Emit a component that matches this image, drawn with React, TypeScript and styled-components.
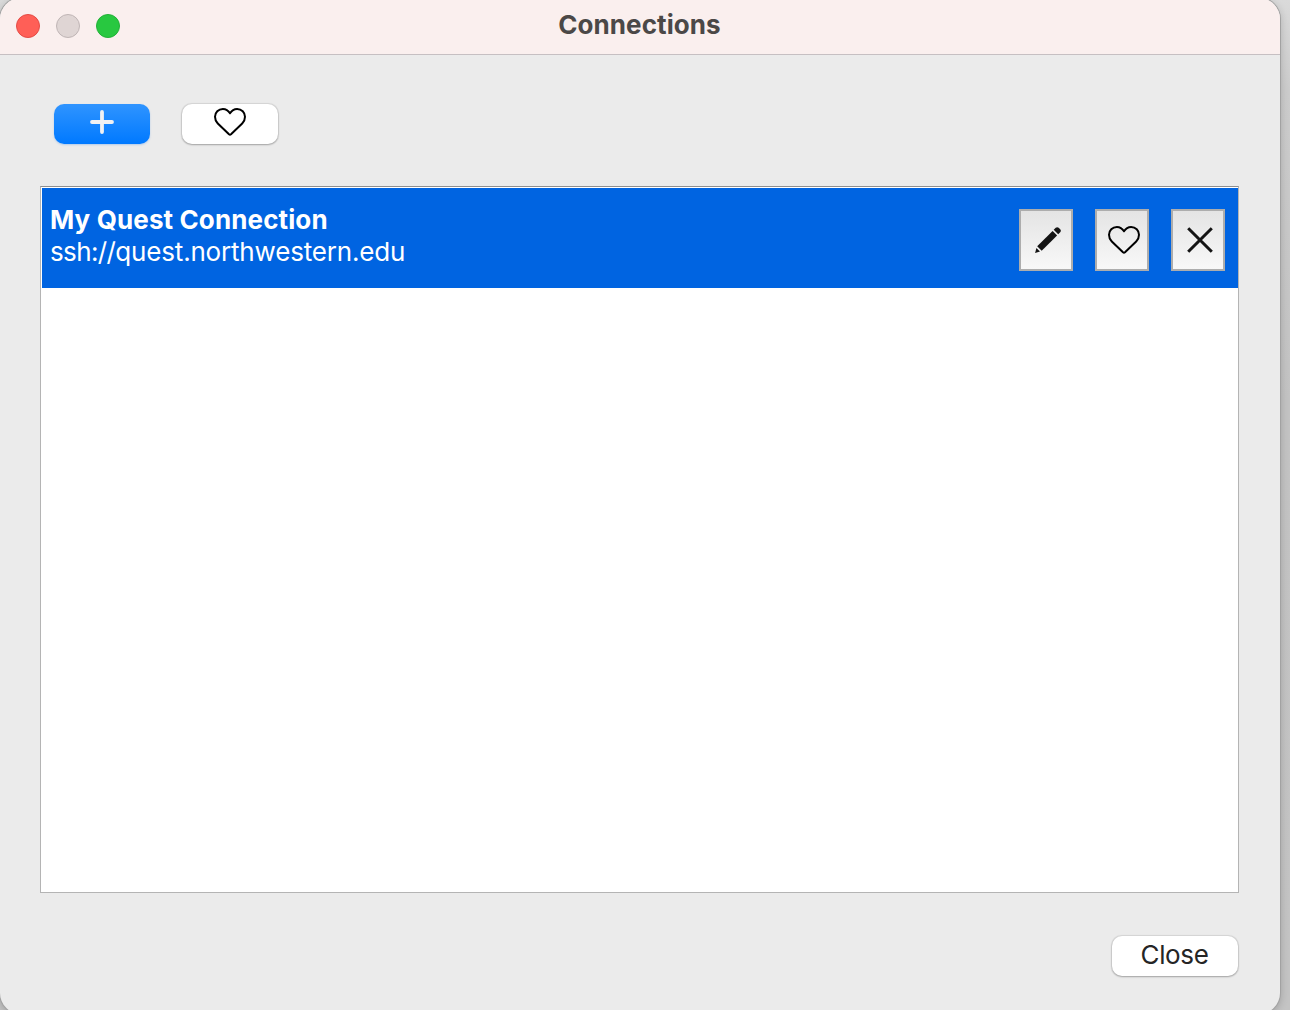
import React from "react";
import styled, { createGlobalStyle } from "styled-components";

const GlobalStyle = createGlobalStyle`
  *, *::before, *::after { box-sizing: border-box; }
  html, body { margin: 0; height: 100%; overflow: hidden; }
  body {
    background: #c4c4c4;
    font-family: Inter, "Liberation Sans", sans-serif;
  }
`;

const Desktop = styled.div`
  width: 1290px;
  height: 1010px;
  overflow: hidden;
  background: linear-gradient(180deg, #dadada 0, #cccccc 90px, #c3c3c3 400px, #c4c4c4 100%);
`;

const Window = styled.main`
  display: flex;
  flex-direction: column;
  width: 1280px;
  height: 1016px;
  margin-top: -2px;
  border-radius: 21px;
  overflow: hidden;
  background: #ebebeb;
  box-shadow: 0 0 0 1px #a2a2a2, 0 2px 9px rgba(0, 0, 0, 0.22);
`;

const TitleBar = styled.header`
  display: grid;
  grid-template-columns: 1fr auto 1fr;
  align-items: center;
  flex: none;
  height: 57px;
  padding: 2px 16px 2px;
  background: #faefee;
  border-bottom: 1px solid #c6bfc2;
`;

const Lights = styled.div`
  display: flex;
  gap: 16px;
`;

const Light = styled.span<{ $fill: string; $edge: string }>`
  width: 24px;
  height: 24px;
  border-radius: 50%;
  background: ${(p) => p.$fill};
  border: 1px solid ${(p) => p.$edge};
`;

const Title = styled.h1`
  margin: 0;
  padding: 0 1px 3px 0;
  color: #4b4847;
  font-size: 26px;
  line-height: 32px;
  font-weight: 700;
  letter-spacing: 0.08px;
`;

const Content = styled.div`
  display: flex;
  flex-direction: column;
  flex: 1;
  padding: 49px 41px 0 40px;
`;

const Toolbar = styled.div`
  display: flex;
  gap: 32px;
  padding-left: 14px;
`;

const PushButton = styled.button<{ $width: number; $primary?: boolean }>`
  display: flex;
  align-items: center;
  justify-content: center;
  width: ${(p) => p.$width}px;
  height: 40px;
  padding: 0 0 4px;
  border: 0;
  border-radius: 10px;
  color: ${(p) => (p.$primary ? "#f0f1f3" : "#252525")};
  background: ${(p) => (p.$primary ? "linear-gradient(#2f94ff, #0079ff)" : "#ffffff")};
  box-shadow: ${(p) =>
    p.$primary
      ? "0 1px 2px rgba(0, 110, 240, 0.25)"
      : "0 0 1px 0.5px rgba(0, 0, 0, 0.09), 0 1px 2px rgba(0, 0, 0, 0.24)"};
`;

const TextButton = styled(PushButton)`
  padding: 0 1px 2px 0;
  font: 400 26px/32px Inter, "Liberation Sans", sans-serif;
  letter-spacing: -0.35px;
`;

const List = styled.section`
  flex: none;
  height: 707px;
  margin-top: 42px;
  padding: 1px 0 0 1px;
  border: 1px solid #b4b4b4;
  border-top-color: #8e8e8e;
  background: #ffffff;
`;

const Row = styled.article`
  display: flex;
  align-items: center;
  justify-content: space-between;
  height: 100px;
  padding: 4px 13px 0 8px;
  background: #0064e1;
  color: #ffffff;
`;

const Details = styled.div`
  padding-bottom: 8px;
  font-size: 26px;
  line-height: 32px;
`;

const Name = styled.div`
  font-weight: 700;
  letter-spacing: 0.12px;
`;

const Address = styled.div`
  letter-spacing: -0.18px;
  font-feature-settings: "calt" 0;
`;

const Scheme = styled.span`
  letter-spacing: -0.62px;
`;

const Actions = styled.div`
  display: flex;
  gap: 22px;
`;

const ActionButton = styled.button`
  display: flex;
  align-items: center;
  justify-content: center;
  width: 54px;
  height: 62px;
  padding: 0 0 0 4px;
  border: 2px solid #adadad;
  background: linear-gradient(#e4e4e4, #f8f8f8);
`;

const Footer = styled.footer`
  display: flex;
  justify-content: flex-end;
  padding: 43px 1px 0 0;
`;

const Glyph = styled.svg`
  display: block;
  flex: none;
`;

const Heart = () => (
  <Glyph width="34" height="30" viewBox="0 0 34 30" fill="none" stroke="#000" strokeWidth="2" strokeLinejoin="round">
    <path d="M17 6.3C15.2 3.4 12.6 2 9.9 2C5.4 2 2 5.4 2 9.8C2 12.6 2.9 14.6 4.8 16.5L16 27.3Q17 28.2 18 27.3L29.2 16.5C31.1 14.6 32 12.6 32 9.8C32 5.4 28.6 2 24.1 2C21.4 2 18.8 3.4 17 6.3Z" />
  </Glyph>
);

const Plus = () => (
  <Glyph width="24" height="24" viewBox="0 0 24 24" fill="none" stroke="currentColor" strokeWidth="3.8" strokeLinecap="round">
    <path d="M12 2V22M2 12H22" />
  </Glyph>
);

const Pencil = () => (
  <Glyph width="28" height="28" viewBox="0 0 28 28" fill="#141414">
    <path d="M18.6 4.9L23.1 9.4L7.7 24.7L3.2 20.2Z" />
    <path d="M19.7 3.8L21.7 1.8C22.6 .9 23.8 .9 24.7 1.8L26.2 3.3C27.1 4.2 27.1 5.4 26.2 6.3L24.2 8.3Z" />
    <path d="M2.4 21.9L6 25.5L1.1 26.9Z" />
  </Glyph>
);

const Cross = () => (
  <Glyph width="28" height="28" viewBox="0 0 28 28" fill="none" stroke="#141414" strokeWidth="3">
    <path d="M2.2 2.2L25.8 25.8M25.8 2.2L2.2 25.8" />
  </Glyph>
);

export default function App() {
  return (
    <>
      <GlobalStyle />
      <Desktop>
        <Window>
          <TitleBar>
            <Lights>
              <Light $fill="#ff5f57" $edge="#e34c46" />
              <Light $fill="#dfd5d4" $edge="#bfb5b5" />
              <Light $fill="#28c840" $edge="#23b038" />
            </Lights>
            <Title>Connections</Title>
          </TitleBar>
          <Content>
            <Toolbar>
              <PushButton $width={96} $primary aria-label="Add connection">
                <Plus />
              </PushButton>
              <PushButton $width={96} aria-label="Favorites">
                <Heart />
              </PushButton>
            </Toolbar>
            <List>
              <Row>
                <Details>
                  <Name>My Quest Connection</Name>
                  <Address>
                    <Scheme>ssh://</Scheme>quest.northwestern.edu
                  </Address>
                </Details>
                <Actions>
                  <ActionButton aria-label="Edit">
                    <Pencil />
                  </ActionButton>
                  <ActionButton aria-label="Favorite">
                    <Heart />
                  </ActionButton>
                  <ActionButton aria-label="Remove">
                    <Cross />
                  </ActionButton>
                </Actions>
              </Row>
            </List>
            <Footer>
              <TextButton $width={126}>Close</TextButton>
            </Footer>
          </Content>
        </Window>
      </Desktop>
    </>
  );
}
